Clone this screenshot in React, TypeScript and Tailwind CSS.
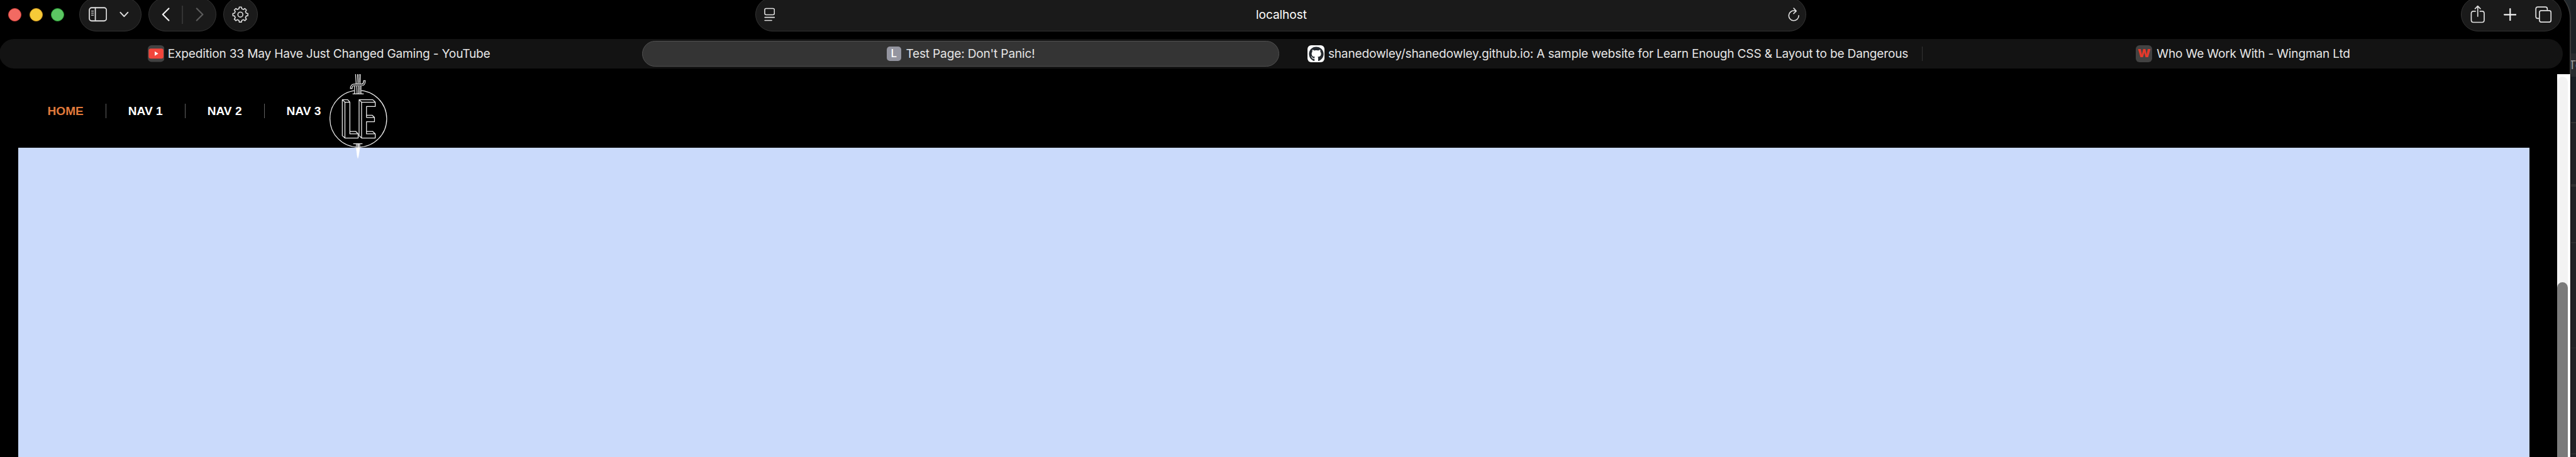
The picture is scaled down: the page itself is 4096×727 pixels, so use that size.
import type { ReactNode } from "react";
import { FaGithub } from "react-icons/fa";

const INK = "#dfdfdf";

function Pill({ className, children }: { className: string; children?: ReactNode }) {
  return (
    <div className={`flex h-[54px] shrink-0 items-center rounded-full border border-[#333333] bg-[#1a1a1a] ${className}`}>
      {children}
    </div>
  );
}

function gearPath(c: number) {
  const points: string[] = [];
  const steps: [number, number][] = [
    [-13.5, 13], [-8.5, 16.4], [8.5, 16.4], [13.5, 13],
  ];
  for (let i = 0; i < 8; i++) {
    for (const [da, r] of steps) {
      const a = ((i * 45 + da - 90) * Math.PI) / 180;
      points.push(`${(c + r * Math.cos(a)).toFixed(2)} ${(c + r * Math.sin(a)).toFixed(2)}`);
    }
  }
  return `M${points.join("L")}Z`;
}

function SidebarIcon() {
  return (
    <svg viewBox="0 0 40 32" className="h-[23.5px] w-[29.4px]" fill="none" stroke={INK} strokeWidth="2.4" strokeLinecap="round">
      <rect x="1.4" y="1.7" width="37" height="28.6" rx="5" />
      <path d="M14.4 2v28" />
      <path d="M6 9h4.4M6 13.4h4.4M6 17.8h4.4" strokeWidth="1.8" />
    </svg>
  );
}

function SwordLogo() {
  return (
    <svg viewBox="99 30 376 550" className="h-[134.6px] w-[92px] shrink-0" fill="none" stroke="#ededed" strokeWidth="5.2" strokeLinejoin="round">
      <circle cx="286" cy="320" r="184.5" />
      <path d="M260 100h46v58h-46z" fill="#000" stroke="none" />
      <path d="M268 30L272 92M281 30L284 92M299 30L297 92" />
      <path d="M284 36l12-5M284 44l12-5M285 52l12-5M285 60l12-5M285 68l11-5M285 76l11-5M285 84l11-5" strokeWidth="3.4" />
      <path d="M262 106v52M276 106l2 52M289 106v52M303 106v52M249 158h72" />
      <path d="M290 116l12-5M290 125l12-5M290 134l12-5M290 143l12-5M290 152l12-5" strokeWidth="3.4" />
      <path d="M240 126C239 106 248 99 264 99H306C321 99 326 90 326 70" strokeWidth="16" />
      <path d="M240 121C240 108 249 100 264 100H306C320 100 326 91 326 75" stroke="#2c2c2c" strokeWidth="6.5" />
      <path d="M199 212H231V418H285V445H199ZM182 196H217L231 212M199 212L182 196V430L199 445M231 402H269L285 418" />
      <path d="M307 212H396V240H339V311H391V339H339V418H396V445H307ZM291 196H380L396 212M307 212L291 196V430L307 445M339 297H376L391 311M339 402H379L396 418" />
      <path d="M271 484h24v24h-24z" fill="#000" stroke="none" />
      <path d="M253 482h60M273 484v26M282 484v26M288 484v26M295 484v26" />
      <path d="M272 508L279 564L283 577L287 564L296 508Z" fill="#fff" stroke="#fff" strokeWidth="2" />
    </svg>
  );
}

function Toolbar() {
  return (
    <div className="flex h-[62px] items-start pl-[13.4px]">
      <div className="mt-[13.2px] flex w-[112.9px] shrink-0 gap-[9.9px]">
        <span className="h-[20.6px] w-[20.6px] rounded-full border border-[#e0443e] bg-[#f26a62]" />
        <span className="ml-[3.3px] h-[20.6px] w-[20.6px] rounded-full border border-[#dea123] bg-[#f6ca38]" />
        <span className="ml-[3.3px] h-[20.6px] w-[20.6px] rounded-full border border-[#2aa436] bg-[#5cc563]" />
      </div>
      <div className="-mt-1 flex">
        <Pill className="w-[98.4px] gap-5 pl-[13.4px]">
          <SidebarIcon />
          <svg viewBox="0 0 20 14" className="h-[10.3px] w-[14.7px]" fill="none" stroke={INK} strokeWidth="2.8" strokeLinecap="round" strokeLinejoin="round">
            <path d="M2 2.5L10 11L18 2.5" />
          </svg>
        </Pill>
        <Pill className="ml-[11.8px] w-[107.2px] pl-[20px]">
          <svg viewBox="0 0 18 30" className="h-[22px] w-[13.2px]" fill="none" stroke="#f0f0f0" strokeWidth="3" strokeLinecap="round" strokeLinejoin="round">
            <path d="M15.5 2L2.5 15L15.5 28" />
          </svg>
          <span className="ml-[18.6px] h-[29px] w-[1.4px] bg-[#333333]" />
          <svg viewBox="0 0 18 30" className="ml-[20.2px] h-[22px] w-[13.2px]" fill="none" stroke="#5c5c5c" strokeWidth="3" strokeLinecap="round" strokeLinejoin="round">
            <path d="M2.5 2L15.5 15L2.5 28" />
          </svg>
        </Pill>
        <Pill className="ml-[11.8px] w-[54.4px] justify-center">
          <svg viewBox="0 0 36 36" className="size-[26.4px]" fill="none" stroke={INK} strokeWidth="2.2" strokeLinejoin="round">
            <path d={gearPath(18)} />
            <circle cx="18" cy="18" r="5.4" />
          </svg>
        </Pill>
      </div>
      <div className="-mt-1 ml-[790.9px]">
        <Pill className="w-[1671.3px] justify-between pr-[9.5px] pl-[13px]">
          <svg viewBox="0 0 24 30" className="h-[22px] w-[17.6px]" fill="none" stroke={INK} strokeWidth="2.2" strokeLinecap="round">
            <rect x="1.3" y="2" width="21" height="13.6" rx="3" />
            <path d="M1.5 21.3h21M1.5 28h15" />
          </svg>
          <span className="pt-px font-['Inter',sans-serif] text-[19.1px] leading-none tracking-[-0.08px] text-white">localhost</span>
          <svg viewBox="0 0 26 30" className="h-[22px] w-[19px]" fill="none" stroke={INK} strokeWidth="2.2" strokeLinecap="round" strokeLinejoin="round">
            <path d="M15.5 7.2A10.8 10.8 0 1 0 23.4 17.4M12.5 1.5L18 7.6L12.2 13" />
          </svg>
        </Pill>
      </div>
      <div className="-mt-1 ml-[1040.5px]">
        <Pill className="w-[160px] pl-[14.5px]">
          <svg viewBox="0 0 32 40" className="h-[29.4px] w-[23.5px]" fill="none" stroke={INK} strokeWidth="2.3" strokeLinecap="round" strokeLinejoin="round">
            <path d="M11 13.5H6.6Q2 13.5 2 18.1V32.8Q2 37.4 6.6 37.4H25.4Q30 37.4 30 32.8V18.1Q30 13.5 25.4 13.5H21M16 24.5V2.5M10.3 8L16 2.2L21.7 8" />
          </svg>
          <svg viewBox="0 0 28 28" className="ml-[29.2px] size-[20.6px]" fill="none" stroke="#f0f0f0" strokeWidth="3" strokeLinecap="round">
            <path d="M14 1.5V26.5M1.5 14H26.5" />
          </svg>
          <svg viewBox="0 0 36 36" className="ml-[30.1px] size-[26.4px]" fill="none" stroke={INK} strokeWidth="2.3" strokeLinejoin="round">
            <rect x="9.4" y="9.4" width="25" height="25" rx="4" />
            <path d="M9 26.4H5.6Q1.6 26.4 1.6 22.4V5.6Q1.6 1.6 5.6 1.6H22.4Q26.4 1.6 26.4 5.6V9" />
          </svg>
        </Pill>
      </div>
    </div>
  );
}

function TabTitle({ className, children }: { className: string; children: ReactNode }) {
  return (
    <span className={`pt-px font-['Inter',sans-serif] text-[19.1px] leading-none tracking-[-0.185px] whitespace-nowrap text-[#e6e6e6] ${className}`}>
      {children}
    </span>
  );
}

function TabStrip() {
  return (
    <div className="-ml-px flex h-[47px] w-[4076.4px] items-center rounded-full bg-[#131313]">
      <div className="flex w-[1021.7px] items-center pl-[236px]">
        <svg viewBox="0 0 36 36" className="size-[26.4px] shrink-0">
          <rect width="36" height="36" rx="8" fill="#424242" />
          <rect x="2" y="7" width="32" height="22" rx="4.5" fill="#f2463c" />
          <path d="M15 13.2V22.8L22.8 18Z" fill="#fff" />
        </svg>
        <TabTitle className="ml-[5.4px]">Expedition 33 May Have Just Changed Gaming - YouTube</TabTitle>
      </div>
      <div className="flex h-[41px] w-[1013px] items-center rounded-full border border-[#505050] bg-[#343434] pl-[388px]">
        <span className="flex h-[23.5px] w-[23.3px] shrink-0 items-center justify-center rounded-[5px] bg-[#9495a0] font-['Inter',sans-serif] text-[17px] leading-none font-medium text-white">
          L
        </span>
        <TabTitle className="ml-[7.4px]">Test Page: Don't Panic!</TabTitle>
      </div>
      <div className="flex h-[23.5px] w-[1023.7px] items-center border-r border-[#333333] pl-[45.8px]">
        <span className="flex size-[26.4px] shrink-0 items-center justify-center rounded-[6px] bg-white">
          <FaGithub className="size-[24px] text-[#24292f]" />
        </span>
        <TabTitle className="ml-[6px]">
          shanedowley/shanedowley.github.io: A sample website for Learn Enough CSS &amp; Layout to be Dangerous
        </TabTitle>
      </div>
      <div className="flex items-center pl-[338.6px]">
        <span className="flex size-[26.4px] shrink-0 items-center justify-center rounded-[6px] bg-[#424242] pb-[3px] font-['Inter',sans-serif] text-[23px] leading-none font-extrabold text-[#e5392b]">
          w
        </span>
        <TabTitle className="ml-[7px]">Who We Work With - Wingman Ltd</TabTitle>
      </div>
    </div>
  );
}

function Page() {
  return (
    <div className="flex h-[609.5px]">
      <main className="flex w-[4066.5px] flex-col bg-black">
        <nav className="relative z-10 flex h-[117.5px] items-center pl-[75.5px] font-['Liberation_Sans',sans-serif] text-[19.1px] leading-[23.5px] font-bold text-white">
          <a className="w-[93.5px] border-r border-[#626262] text-[#e27a3b]">HOME</a>
          <a className="w-[125.9px] border-r border-[#626262] pl-[34.8px]">NAV 1</a>
          <a className="w-[125.9px] border-r border-[#626262] pl-[34.8px]">NAV 2</a>
          <a className="w-[102.8px] pl-[34.8px]">NAV 3</a>
          <div className="self-start">
            <SwordLogo />
          </div>
        </nav>
        <section className="mr-[44px] ml-[29.4px] flex-1 bg-[#cadafb]" />
      </main>
      <div className="flex w-[20.6px] flex-col bg-white pt-[4.4px]">
        <div className="flex w-[16.2px] flex-1 flex-col rounded-t-full bg-[#f3f3f3] pt-[327.5px]">
          <div className="w-full flex-1 rounded-t-full bg-[#7b7b7b]" />
        </div>
      </div>
    </div>
  );
}

function Backdrop() {
  return (
    <div className="flex h-full w-2 flex-col overflow-hidden bg-[#222326]">
      <div className="h-[85px] shrink-0 bg-[#1d2226]" />
      <div className="flex h-[37px] shrink-0 items-center bg-[#292b2f] font-['Inter',sans-serif] text-[19.1px] text-[#9a9a9a]">
        <span className="-ml-1">To</span>
      </div>
      <div className="h-[72px] shrink-0 bg-[#1b1f25]" />
      <div className="h-[1.5px] shrink-0 bg-[#333333]" />
      <div className="h-[97px] shrink-0" />
      <div className="h-[4.4px] shrink-0 bg-[#313131]" />
      <div className="h-[88.5px] shrink-0" />
      <div className="h-[1.5px] shrink-0 bg-[#2e2e30]" />
      <div className="h-[166px] shrink-0" />
      <div className="h-[1.5px] shrink-0 bg-[#2e2e30]" />
      <div className="h-[167px] shrink-0" />
      <div className="h-[1.5px] shrink-0 bg-[#2e2e30]" />
    </div>
  );
}

export default function App() {
  return (
    <div className="flex h-[727px] w-[4096px] overflow-hidden bg-[#20262a]">
      <div className="w-[4088px] shrink-0">
        <div className="-mt-[18px] h-[135.5px] overflow-hidden rounded-tr-[47px] border-r-2 border-[#3a3a3a] bg-black pt-[18px]">
          <Toolbar />
          <TabStrip />
        </div>
        <div className="border-r border-black">
          <Page />
        </div>
      </div>
      <Backdrop />
    </div>
  );
}
